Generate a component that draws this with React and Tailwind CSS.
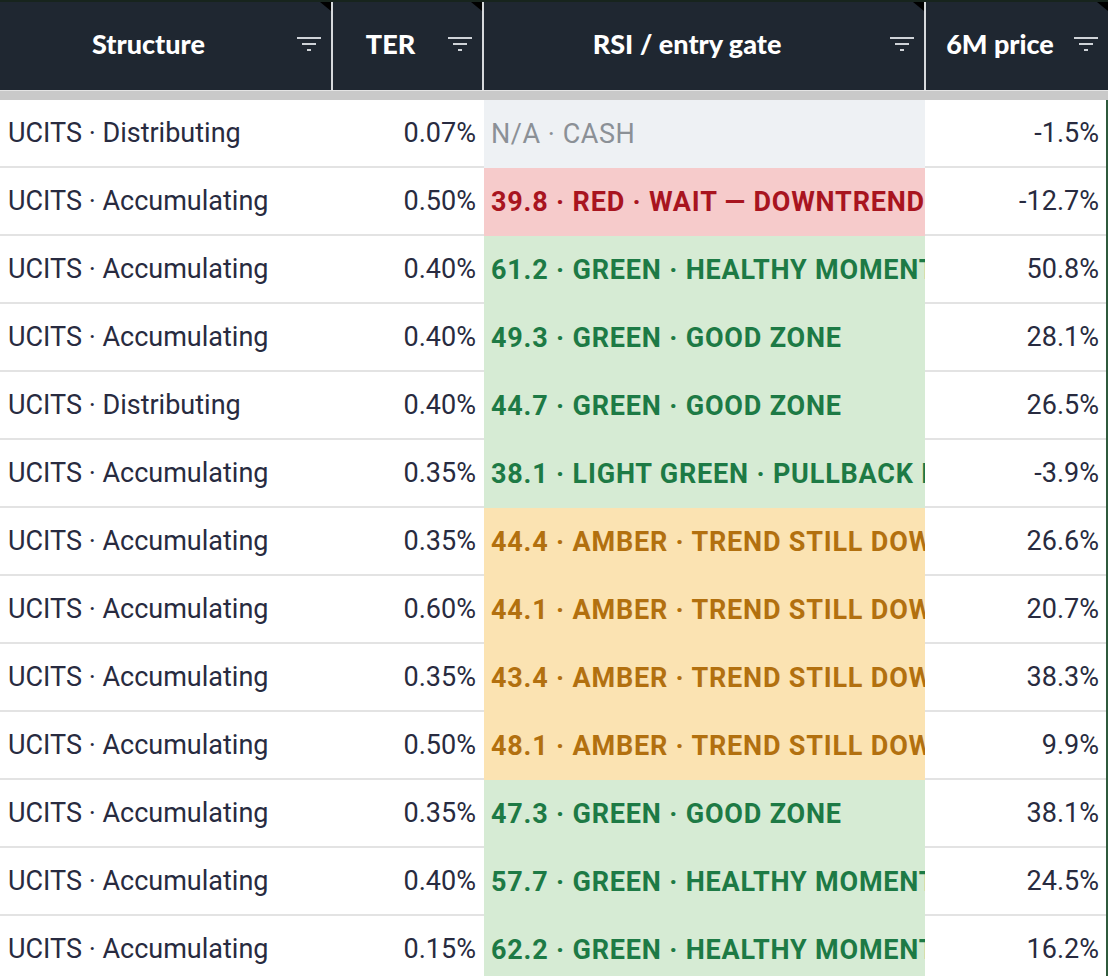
import React from "react";

const rows = [
  ["Distributing", "0.07%", "na", "N/A · CASH", "-1.5%"],
  ["Accumulating", "0.50%", "red", "39.8 · RED · WAIT — DOWNTREND", "-12.7%"],
  ["Accumulating", "0.40%", "green", "61.2 · GREEN · HEALTHY MOMENTUM", "50.8%"],
  ["Accumulating", "0.40%", "green", "49.3 · GREEN · GOOD ZONE", "28.1%"],
  ["Distributing", "0.40%", "green", "44.7 · GREEN · GOOD ZONE", "26.5%"],
  ["Accumulating", "0.35%", "green", "38.1 · LIGHT GREEN · PULLBACK BUY", "-3.9%"],
  ["Accumulating", "0.35%", "amber", "44.4 · AMBER · TREND STILL DOWN", "26.6%"],
  ["Accumulating", "0.60%", "amber", "44.1 · AMBER · TREND STILL DOWN", "20.7%"],
  ["Accumulating", "0.35%", "amber", "43.4 · AMBER · TREND STILL DOWN", "38.3%"],
  ["Accumulating", "0.50%", "amber", "48.1 · AMBER · TREND STILL DOWN", "9.9%"],
  ["Accumulating", "0.35%", "green", "47.3 · GREEN · GOOD ZONE", "38.1%"],
  ["Accumulating", "0.40%", "green", "57.7 · GREEN · HEALTHY MOMENTUM", "24.5%"],
  ["Accumulating", "0.15%", "green", "62.2 · GREEN · HEALTHY MOMENTUM", "16.2%"],
];

const gateStyles = {
  na: "bg-[#eef1f4] text-[#8b9096] font-normal tracking-[0.02em]",
  red: "bg-[#f6cbcb] text-[#a8141f] font-bold tracking-[0.03em]",
  green: "bg-[#d6ebd4] text-[#1d7a45] font-bold tracking-[0.03em]",
  amber: "bg-[#fbe3b2] text-[#b2700f] font-bold tracking-[0.03em]",
};

function FilterIcon() {
  return (
    <svg width="24" height="16" viewBox="0 0 24 16" className="shrink-0">
      <rect x="0" y="1" width="24" height="2" fill="#cfd3d8" />
      <rect x="5" y="7" width="14" height="2" fill="#cfd3d8" />
      <rect x="10" y="13" width="4" height="2" fill="#cfd3d8" />
    </svg>
  );
}

function HeaderCell({ label, width, sep }) {
  return (
    <div
      className={`relative flex h-full items-center pb-[4px] pr-[10px] ${width} ${
        sep ? "border-r-2 border-[#d6d9dc]" : ""
      }`}
    >
      <div className="flex-1 text-center text-[27px] font-black text-white [font-family:Lato,'Noto_Sans',sans-serif]">
        {label}
      </div>
      <FilterIcon />
      <span className="absolute right-0 top-0 h-0 w-0 border-l-[11px] border-t-[9px] border-l-transparent border-t-black" />
    </div>
  );
}

export default function App() {
  return (
    <div className="h-[976px] w-[1108px] overflow-hidden bg-white [font-family:Roboto,'Liberation_Sans',sans-serif]">
      <div className="flex h-[90px] w-[1108px] border-t-2 border-[#17241d] bg-[#1f2731]">
        <HeaderCell label="Structure" width="w-[333px]" sep />
        <HeaderCell label="TER" width="w-[151px]" sep />
        <HeaderCell label="RSI / entry gate" width="w-[442px]" sep />
        <HeaderCell label="6M price" width="w-[182px]" />
      </div>
      <div className="h-[10px] border-t border-[#e4e4e4] bg-[#c9c9c9]" />
      <div className="flex w-[1108px] flex-col border-r-2 border-[#2f5a3c]">
        {rows.map((r, i) => (
          <div key={i} className="flex h-[68px] text-[27px] text-[#282b40]">
            <div className="flex w-[333px] items-center border-b-2 border-[#e3e3e3] pl-[8px] whitespace-nowrap">
              UCITS · {r[0]}
            </div>
            <div className="flex w-[151px] items-center justify-end border-b-2 border-[#e3e3e3] pr-[8px]">
              {r[1]}
            </div>
            <div
              className={`flex w-[441px] items-center overflow-hidden whitespace-nowrap pl-[7px] ${gateStyles[r[2]]}`}
            >
              {r[3]}
            </div>
            <div className="flex flex-1 items-center justify-end border-b-2 border-[#e3e3e3] pr-[7px]">
              {r[4]}
            </div>
          </div>
        ))}
      </div>
    </div>
  );
}
